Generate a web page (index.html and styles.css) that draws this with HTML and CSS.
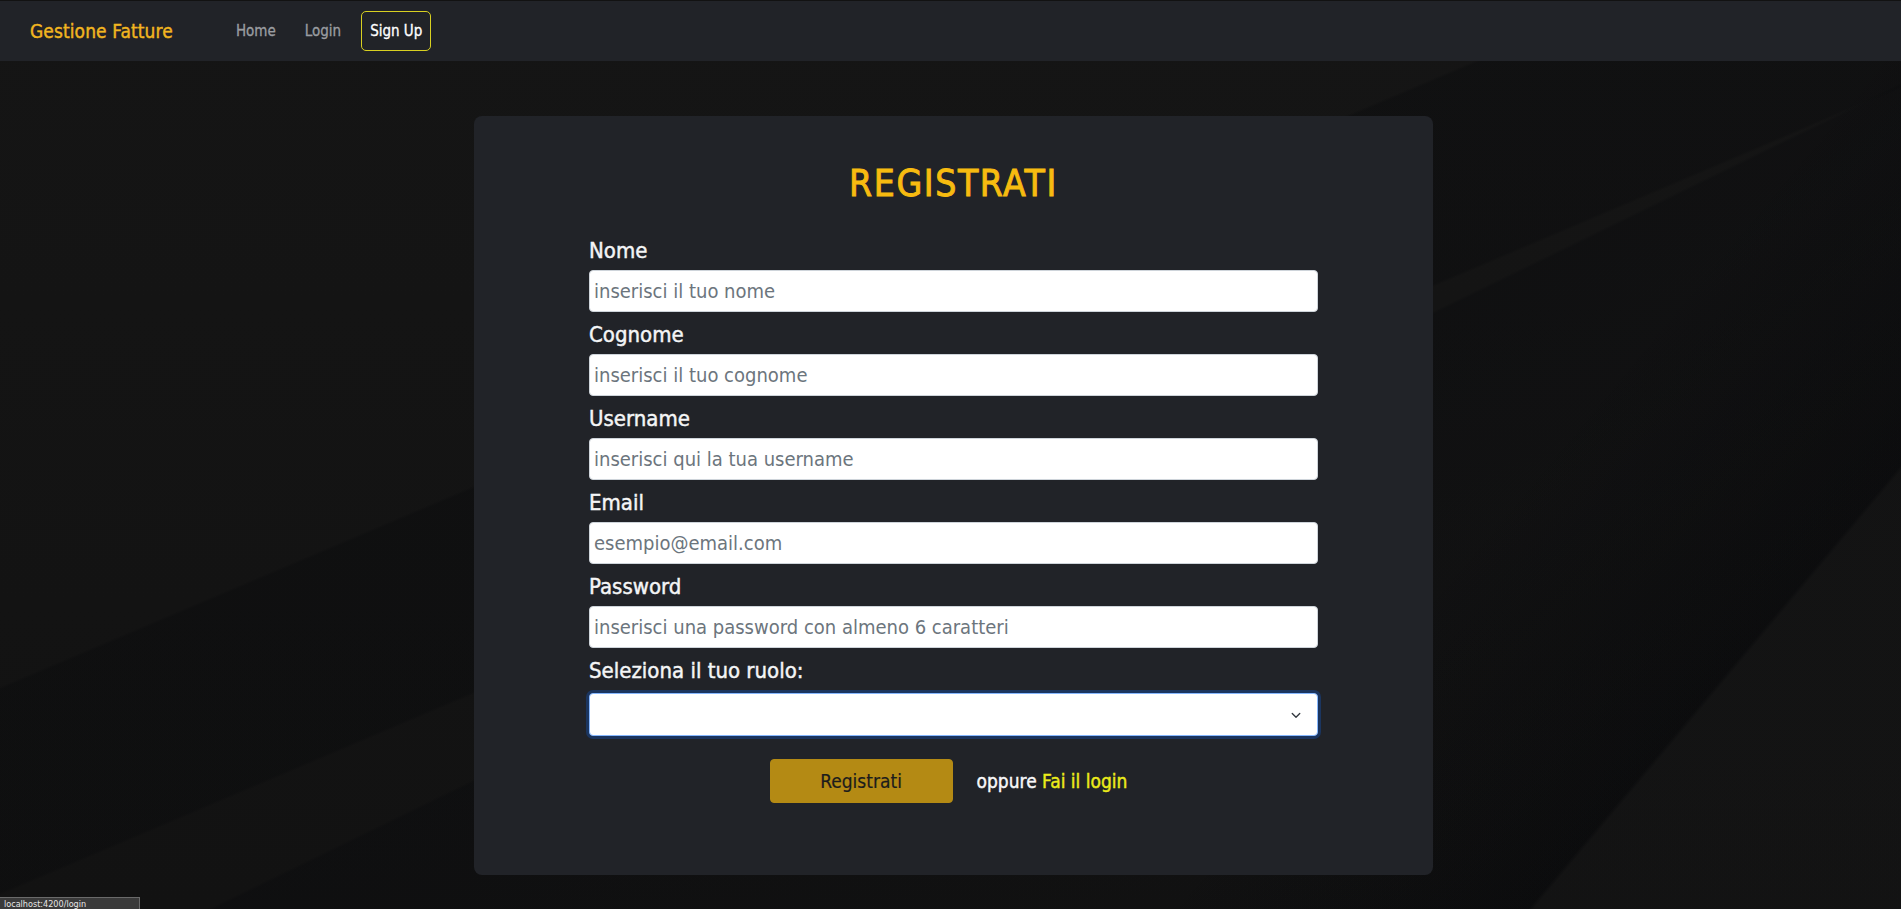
FILE: index.html
```html
<!DOCTYPE html>
<html lang="it">
<head>
<meta charset="utf-8">
<title>Gestione Fatture - Registrati</title>
<link rel="stylesheet" href="styles.css">
</head>
<body>
<nav class="navbar">
  <a class="brand" href="#">Gestione Fatture</a>
  <ul class="nav-links">
    <li><a class="nav-link" href="#">Home</a></li>
    <li><a class="nav-link" href="#">Login</a></li>
    <li><a class="nav-link active" href="#">Sign Up</a></li>
  </ul>
</nav>
<main class="page">
  <section class="card">
    <h1 class="title">REGISTRATI</h1>
    <form class="form">
      <div class="group">
        <label class="label" for="nome">Nome</label>
        <input class="input" id="nome" type="text" placeholder="inserisci il tuo nome">
      </div>
      <div class="group">
        <label class="label" for="cognome">Cognome</label>
        <input class="input" id="cognome" type="text" placeholder="inserisci il tuo cognome">
      </div>
      <div class="group">
        <label class="label" for="username">Username</label>
        <input class="input" id="username" type="text" placeholder="inserisci qui la tua username">
      </div>
      <div class="group">
        <label class="label" for="email">Email</label>
        <input class="input" id="email" type="email" placeholder="esempio@email.com">
      </div>
      <div class="group">
        <label class="label" for="password">Password</label>
        <input class="input" id="password" type="password" placeholder="inserisci una password con almeno 6 caratteri">
      </div>
      <div class="group">
        <label class="label" for="ruolo">Seleziona il tuo ruolo:</label>
        <div class="select focused">
          <span class="select-value"></span>
          <svg class="chevron" width="12" height="12" viewBox="0 0 16 16"><path d="M3 6l5 5 5-5" fill="none" stroke="#343a40" stroke-width="1.8" stroke-linecap="round" stroke-linejoin="round"/></svg>
        </div>
      </div>
      <div class="actions">
        <button class="btn" type="button">Registrati</button>
        <span class="alt">oppure <a class="alt-link" href="#">Fai il login</a></span>
      </div>
    </form>
  </section>
</main>
<div class="status">localhost:4200/login</div>
</body>
</html>
```
FILE: styles.css
```css
* { box-sizing: border-box; }

html, body { margin: 0; padding: 0; }

body {
  height: 909px;
  overflow: hidden;
  font-family: "DejaVu Sans Condensed", "DejaVu Sans", sans-serif;
  font-stretch: condensed;
  color: #f8f9fa;
  background-color: #131313;
  background-image:
    linear-gradient(157deg, rgba(0,0,0,0) 0, rgba(0,0,0,0) 40%, rgba(8,9,11,0.35) 40.2%, rgba(8,9,11,0.35) 52%, rgba(0,0,0,0) 52.2%),
    linear-gradient(154deg, rgba(0,0,0,0) 0, rgba(0,0,0,0) 55%, rgba(8,9,12,0.35) 55.2%, rgba(8,9,12,0.1) 80%),
    linear-gradient(130deg, rgba(0,0,0,0) 0, rgba(0,0,0,0) 72%, rgba(5,6,8,0.45) 86%, rgba(22,22,22,0.5) 86.2%),
    linear-gradient(180deg, #151515 0, #121212 100%);
}

.navbar {
  height: 61px;
  background: #212328;
  border-top: 1px solid #121212;
  display: flex;
  align-items: center;
  padding-left: 30px;
}

.brand {
  color: #f2b620;
  font-size: 19px;
  text-decoration: none;
  margin-right: 54px;
  letter-spacing: 0.1px;
  -webkit-text-stroke: 0.4px #f2b620;
}

.nav-links {
  list-style: none;
  margin: 0;
  padding: 0;
  display: flex;
  gap: 11px;
  align-items: center;
}

.nav-link {
  display: block;
  padding: 0 8px;
  height: 40px;
  line-height: 38px;
  font-size: 15px;
  color: #9a9da1;
  text-decoration: none;
  border: 1px solid transparent;
  border-radius: 5px;
  -webkit-text-stroke: 0.3px #9a9da1;
}

.nav-link.active {
  color: #ffffff;
  border-color: #d8d021;
  -webkit-text-stroke: 0.3px #ffffff;
}

.page {
  display: flex;
  justify-content: center;
  padding-top: 55px;
  padding-left: 6px;
}

.card {
  width: 959px;
  background: #212328;
  border-radius: 8px;
  padding: 46px 115px 72px;
}

.title {
  margin: 0 0 31px;
  text-align: center;
  font-size: 37px;
  font-weight: normal;
  line-height: 44px;
  letter-spacing: 1.6px;
  color: #f7bb10;
  -webkit-text-stroke: 0.9px #f7bb10;
}

.form {
  display: flex;
  flex-direction: column;
}

.group {
  display: flex;
  flex-direction: column;
  margin-bottom: 9px;
}

.label {
  font-size: 22px;
  line-height: 28px;
  margin-bottom: 5px;
  color: #f4f5f6;
  -webkit-text-stroke: 0.45px #f4f5f6;
}

.input {
  height: 42px;
  width: 100%;
  border: 1px solid #ced4da;
  border-radius: 4px;
  background: #ffffff;
  padding: 0 4px;
  font-family: inherit;
  font-stretch: condensed;
  font-size: 20px;
  color: #212529;
  outline: none;
}

.input::placeholder {
  color: #6c757d;
}

.select {
  height: 43px;
  width: 100%;
  margin-top: 3px;
  background: #ffffff;
  border: 1px solid #86b7fe;
  border-radius: 4px;
  box-shadow: 0 0 0 3px #1b355f;
  display: flex;
  align-items: center;
  justify-content: space-between;
  padding: 0 15px 0 12px;
}

.chevron {
  width: 12px;
  height: 12px;
}

.actions {
  display: flex;
  justify-content: center;
  align-items: center;
  gap: 24px;
  margin-top: 14px;
  padding-right: 10px;
}

.btn {
  width: 183px;
  height: 44px;
  background: #b48a14;
  border: 1px solid #b48a14;
  border-radius: 4px;
  font-family: inherit;
  font-stretch: condensed;
  font-size: 19px;
  color: #1c1c1c;
  cursor: pointer;
  -webkit-text-stroke: 0.2px #1c1c1c;
}

.alt {
  font-size: 19px;
  color: #f8f9fa;
  -webkit-text-stroke: 0.4px #f8f9fa;
}

.alt-link {
  color: #ecec1a;
  text-decoration: none;
  -webkit-text-stroke: 0.4px #ecec1a;
}

.status {
  position: fixed;
  left: 0;
  top: 897px;
  width: 140px;
  height: 12px;
  padding: 1px 4px 0;
  background: #3a3a3a;
  border: 1px solid #6a6a6a;
  border-left: none;
  border-bottom: none;
  font-family: "DejaVu Sans", sans-serif;
  font-size: 9px;
  line-height: 10px;
  color: #e6e6e6;
  white-space: nowrap;
  overflow: hidden;
}
```
